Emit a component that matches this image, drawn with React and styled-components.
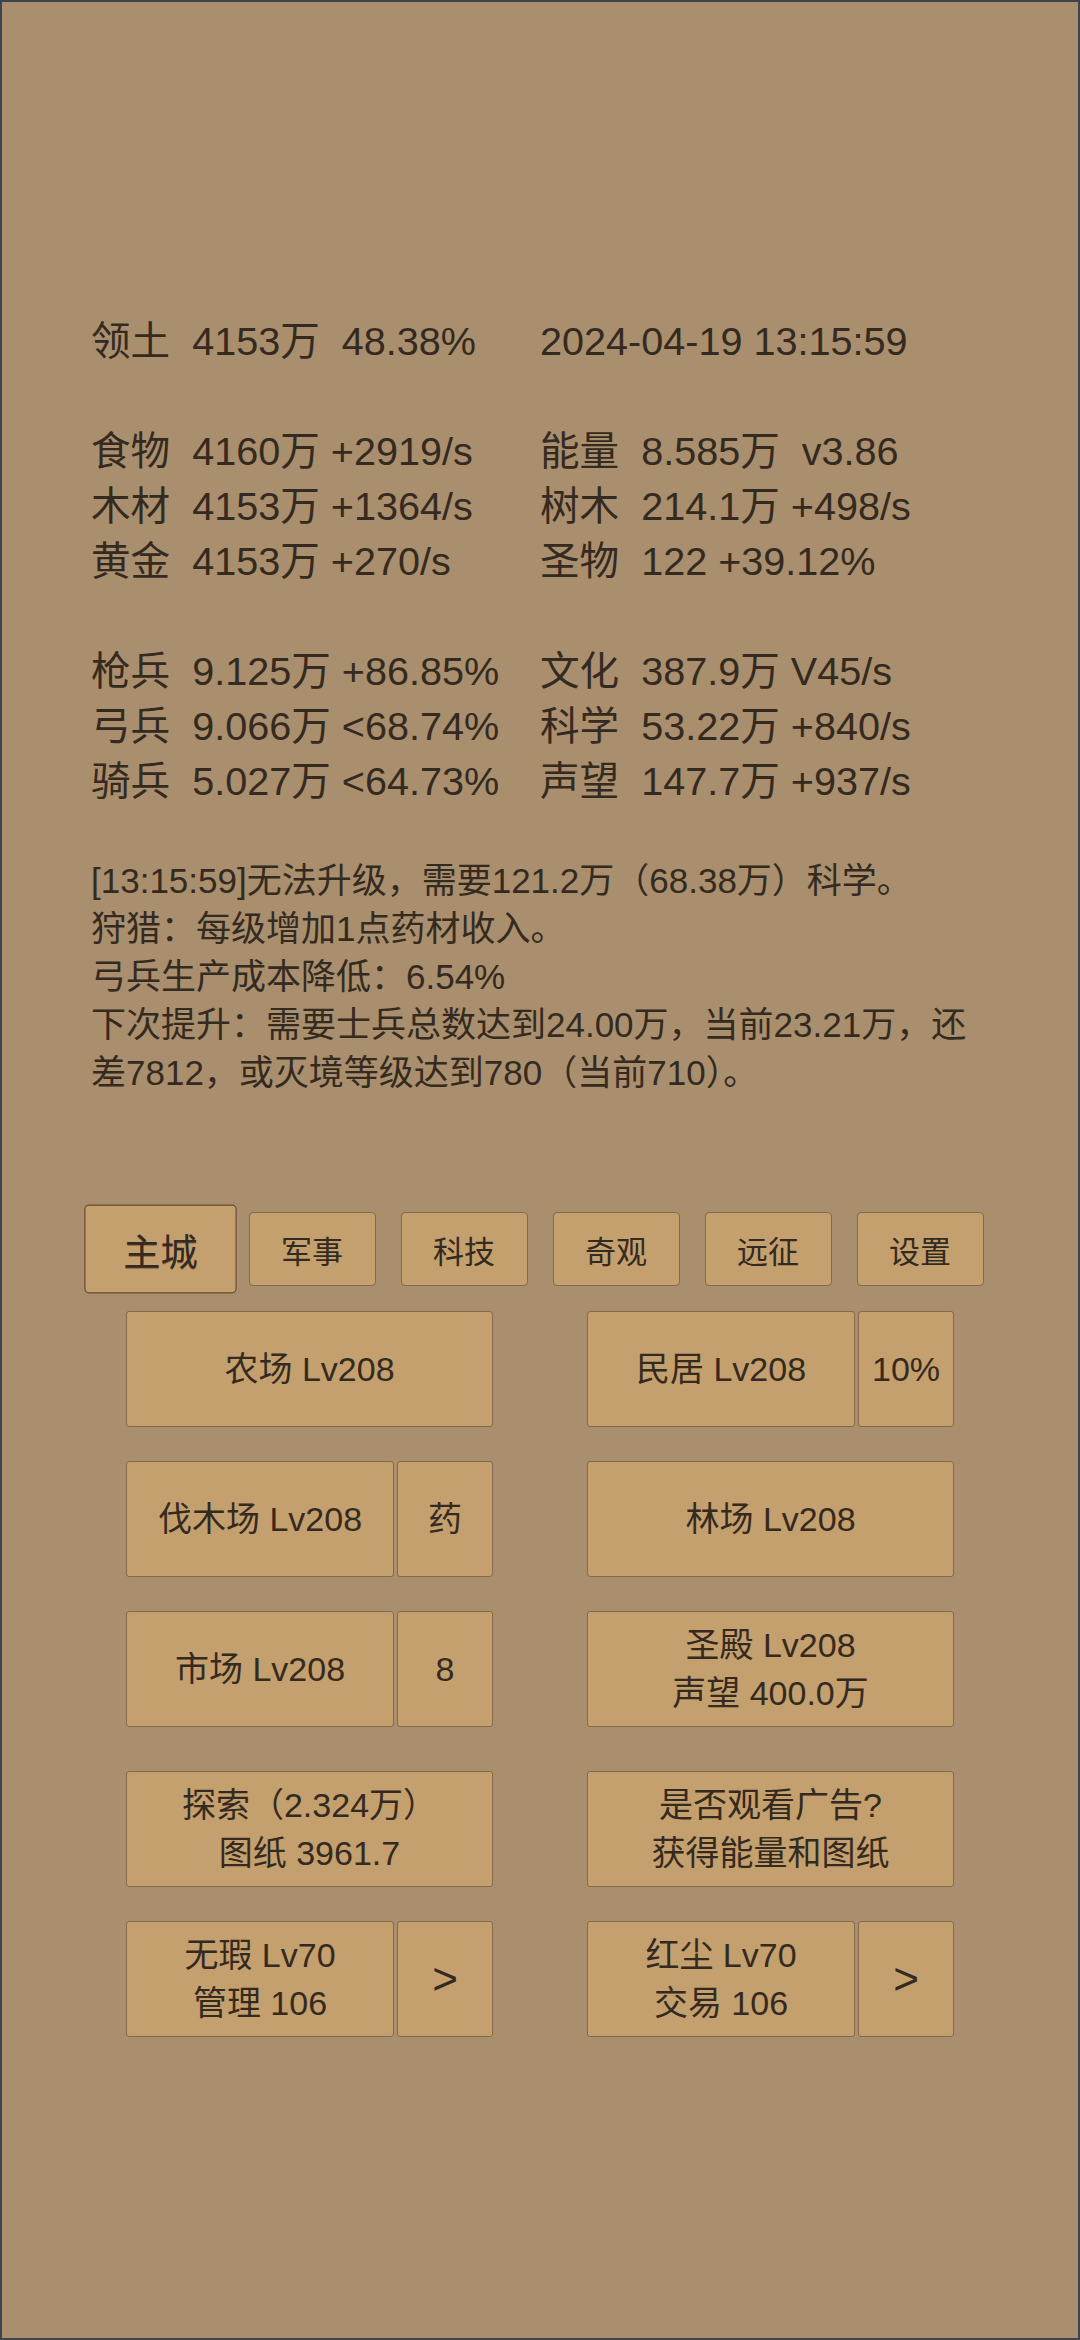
import React from "react"
import styled, { createGlobalStyle } from "styled-components"

const GlobalStyle = createGlobalStyle`
  html, body {
    margin: 0;
    padding: 0;
    background: #a98f6e;
  }
  * {
    box-sizing: border-box;
  }
`

const Screen = styled.div`
  min-height: 100vh;
  border: 2px solid #3d4450;
  background: #a98f6e;
  padding: 312px 89px 0;
  color: #342a20;
  font-family: "Liberation Sans", "Noto Sans CJK SC", sans-serif;
`

const Stats = styled.div`
  display: flex;
  flex-direction: column;
  gap: 55px;
`

const StatBlock = styled.div`
  display: grid;
  grid-template-columns: 1fr 1fr;
  font-size: 39.6px;
  line-height: 55px;
`

const Stat = styled.div`
  white-space: pre;
`

const Log = styled.div`
  margin-top: 48px;
  font-size: 35px;
  line-height: 48px;
`

const Tabs = styled.div`
  display: flex;
  justify-content: center;
  gap: 25px;
  margin-top: 115px;
`

const Tab = styled.div`
  width: 127px;
  height: 74px;
  display: flex;
  align-items: center;
  justify-content: center;
  background: #c4a06e;
  border: 1px solid ${p => (p.$active ? "#6a4c2e" : "#86684a")};
  border-radius: 4px;
  font-size: 31px;
  transform: ${p => (p.$active ? "scale(1.2)" : "none")};
  text-shadow: ${p => (p.$active ? "0 1px 0 rgba(60, 40, 20, 0.45)" : "none")};
`

const Buildings = styled.div`
  display: grid;
  grid-template-columns: 367px 367px;
  justify-content: center;
  column-gap: 94px;
  row-gap: 34px;
  margin-top: 25px;
`

const Group = styled.div`
  display: flex;
  gap: 3px;
  height: 116px;
  margin-top: ${p => (p.$gapTop ? "10px" : "0")};
`

const Btn = styled.div`
  flex: 1;
  display: flex;
  flex-direction: column;
  align-items: center;
  justify-content: center;
  background: #c4a06e;
  border: 1px solid #86684a;
  border-radius: 3px;
  font-size: 34px;
  line-height: 48px;
  text-align: center;
`

const SideBtn = styled(Btn)`
  flex: 0 0 96px;
  font-size: ${p => (p.$big ? "44px" : "34px")};
`

const stats = [
  [
    ["领土  4153万  48.38%", "2024-04-19 13:15:59"],
  ],
  [
    ["食物  4160万 +2919/s", "能量  8.585万  v3.86"],
    ["木材  4153万 +1364/s", "树木  214.1万 +498/s"],
    ["黄金  4153万 +270/s", "圣物  122 +39.12%"],
  ],
  [
    ["枪兵  9.125万 +86.85%", "文化  387.9万 V45/s"],
    ["弓兵  9.066万 <68.74%", "科学  53.22万 +840/s"],
    ["骑兵  5.027万 <64.73%", "声望  147.7万 +937/s"],
  ],
]

const tabs = ["主城", "军事", "科技", "奇观", "远征", "设置"]

const buildings = [
  { lines: ["农场 Lv208"] },
  { lines: ["民居 Lv208"], side: "10%" },
  { lines: ["伐木场 Lv208"], side: "药" },
  { lines: ["林场 Lv208"] },
  { lines: ["市场 Lv208"], side: "8" },
  { lines: ["圣殿 Lv208", "声望 400.0万"] },
  { lines: ["探索（2.324万）", "图纸 3961.7"], gapTop: true },
  { lines: ["是否观看广告?", "获得能量和图纸"], gapTop: true },
  { lines: ["无瑕 Lv70", "管理 106"], side: ">", big: true },
  { lines: ["红尘 Lv70", "交易 106"], side: ">", big: true },
]

const App = () => (
  <>
    <GlobalStyle />
    <Screen>
      <Stats>
        {stats.map((block, i) => (
          <StatBlock key={i}>
            {block.map(([left, right]) => (
              <React.Fragment key={left}>
                <Stat>{left}</Stat>
                <Stat>{right}</Stat>
              </React.Fragment>
            ))}
          </StatBlock>
        ))}
      </Stats>
      <Log>
        <div>[13:15:59]无法升级，需要121.2万（68.38万）科学。</div>
        <div>狩猎：每级增加1点药材收入。</div>
        <div>弓兵生产成本降低：6.54%</div>
        <div>下次提升：需要士兵总数达到24.00万，当前23.21万，还差7812，或灭境等级达到780（当前710）。</div>
      </Log>
      <Tabs>
        {tabs.map((t, i) => (
          <Tab key={t} $active={i === 0}>{t}</Tab>
        ))}
      </Tabs>
      <Buildings>
        {buildings.map((b, i) => (
          <Group key={i} $gapTop={b.gapTop}>
            <Btn>
              {b.lines.map(l => (
                <div key={l}>{l}</div>
              ))}
            </Btn>
            {b.side && <SideBtn $big={b.big}>{b.side}</SideBtn>}
          </Group>
        ))}
      </Buildings>
    </Screen>
  </>
)

export default App
